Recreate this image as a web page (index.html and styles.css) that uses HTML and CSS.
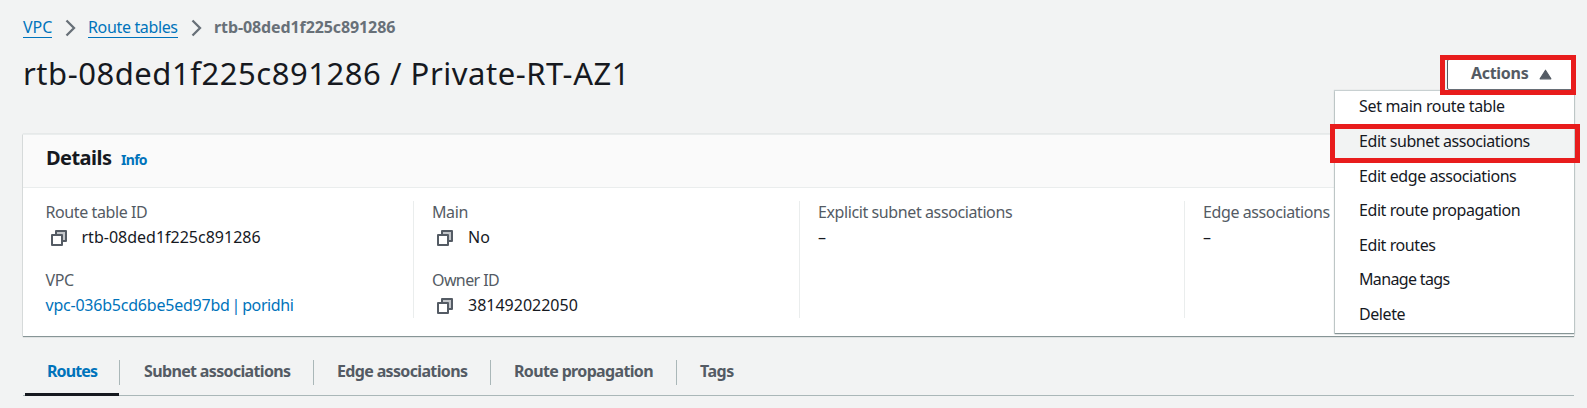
FILE: index.html
```html
<!DOCTYPE html>
<html lang="en">
<head>
<meta charset="utf-8">
<title>Route table details</title>
<link rel="stylesheet" href="styles.css">
</head>
<body>
<svg class="defs" width="0" height="0">
  <symbol id="copy" viewBox="0 0 16 16">
    <path d="M5 2h9v9h-2V5H5z" fill="#c3c6ca"/>
    <path d="M5 4.500V1h10v10h-3.500M1 5h10v10H1z" fill="none" stroke="#545b64" stroke-width="2" stroke-linejoin="round"/>
  </symbol>
  <symbol id="chevron" viewBox="0 0 11 18">
    <path d="M1.500 1.500L9 9l-7.500 7.500" fill="none" stroke="#687078" stroke-width="2.300"/>
  </symbol>
</svg>
<div class="page">
  <nav class="breadcrumbs">
    <a class="crumb crumb-vpc">VPC</a>
    <svg class="chevron"><use href="#chevron"/></svg>
    <a class="crumb crumb-tables">Route tables</a>
    <svg class="chevron"><use href="#chevron"/></svg>
    <span class="crumb-current">rtb-08ded1f225c891286</span>
  </nav>
  <header class="page-header">
    <h1 class="title">rtb-08ded1f225c891286 / Private-RT-AZ1</h1>
    <div class="actions">
      <button class="actions-button">Actions<svg class="caret" viewBox="0 0 12 10"><path d="M6 1l5 8H1z" fill="#545b64" stroke="#545b64" stroke-linejoin="round"/></svg></button>
      <div class="marker marker-button"></div>
      <ul class="menu">
        <li class="menu-item menu-main">Set main route table</li>
        <li class="menu-item highlighted">Edit subnet associations<div class="marker marker-item"></div></li>
        <li class="menu-item">Edit edge associations</li>
        <li class="menu-item">Edit route propagation</li>
        <li class="menu-item">Edit routes</li>
        <li class="menu-item menu-tags">Manage tags</li>
        <li class="menu-item">Delete</li>
      </ul>
    </div>
  </header>
  <section class="card">
    <div class="card-header"><h2 class="card-title">Details</h2><a class="info">Info</a></div>
    <div class="card-body">
      <div class="column">
        <div class="field"><div class="label">Route table ID</div><div class="value"><svg class="copy"><use href="#copy"/></svg><span>rtb-08ded1f225c891286</span></div></div>
        <div class="field"><div class="label">VPC</div><div class="value"><a class="link">vpc-036b5cd6be5ed97bd | <span class="vpc-name">poridhi</span></a></div></div>
      </div>
      <div class="column">
        <div class="field"><div class="label">Main</div><div class="value"><svg class="copy"><use href="#copy"/></svg><span>No</span></div></div>
        <div class="field"><div class="label label-owner">Owner ID</div><div class="value"><svg class="copy"><use href="#copy"/></svg><span>381492022050</span></div></div>
      </div>
      <div class="column">
        <div class="field"><div class="label">Explicit subnet associations</div><div class="value">–</div></div>
      </div>
      <div class="column">
        <div class="field"><div class="label">Edge associations</div><div class="value">–</div></div>
      </div>
    </div>
  </section>
  <nav class="tabs">
    <a class="tab active">Routes</a>
    <a class="tab tab-subnet">Subnet associations</a>
    <a class="tab tab-edge">Edge associations</a>
    <a class="tab tab-propagation">Route propagation</a>
    <a class="tab tab-tags">Tags</a>
  </nav>
</div>
</body>
</html>
```
FILE: styles.css
```css
* { box-sizing: border-box; }
body { margin: 0; background: #f2f3f3; color: #16191f; font: 16px/22px "Noto Sans", sans-serif; height: 408px; overflow: hidden; }
.defs { display: block; height: 0; }
.page { padding: 16px 13px 0 23px; }
.breadcrumbs { display: flex; height: 22px; align-items: flex-start; white-space: nowrap; }
.crumb { color: #0073bb; border-bottom: 1px solid #0073bb; height: 22px; }
.crumb-vpc { width: 29px; }
.crumb-tables { width: 90px; letter-spacing: -0.35px; }
.chevron { width: 11px; height: 18px; margin: 3px 12px 0 13px; flex: none; }
.crumb-current { color: #687078; font-weight: 700; letter-spacing: -0.1px; }
.page-header { display: flex; justify-content: space-between; height: 96px; }
.title { margin: 14px 0 0; font-size: 31px; line-height: 43px; font-weight: 400; white-space: nowrap; letter-spacing: 0.54px; }
.actions { position: relative; width: 127px; padding-top: 21px; }
.actions-button { display: flex; align-items: center; width: 127px; height: 31px; padding: 0 0 3px 23px; border: 1px solid #545b64; border-radius: 2px; background: #fff; color: #545b64; font: 700 16px/22px "Noto Sans", sans-serif; letter-spacing: -0.3px; }
.caret { width: 13px; height: 11px; margin: 2px 0 0 11px; }
.marker { position: absolute; border: 5px solid #e81c1c; z-index: 3; }
.marker-button { left: -7px; top: 17px; width: 136px; height: 40px; }
.menu { position: absolute; z-index: 2; right: 0; top: 53px; width: 239px; height: 242px; margin: 0; padding: 0; list-style: none; background: #fff; box-shadow: 0 1px 1px #879596, 0 0 1px 1px #c8d0d1; display: flex; flex-direction: column; }
.menu-item { position: relative; height: 34.6px; padding: 4.4px 24px; white-space: nowrap; letter-spacing: -0.42px; }
.menu-main { letter-spacing: -0.33px; }
.menu-tags { letter-spacing: -0.65px; }
.highlighted { background: #f2f3f3; }
.marker-item { left: -5px; top: -2px; width: 250px; height: 39px; }
.card { width: 1551px; height: 202px; background: #fff; box-shadow: 0 1px 1px #879596, 0 0 1px #aab7b8; }
.card-header { display: flex; height: 54px; padding: 9px 23px; background: #fafafa; border-top: 1px solid #eaeded; border-bottom: 1px solid #eaeded; align-items: baseline; }
.card-title { margin: 0; font-size: 20px; line-height: 28px; font-weight: 700; width: 75px; letter-spacing: -0.55px; }
.info { color: #0073bb; font-size: 14px; font-weight: 700; letter-spacing: -0.7px; }
.card-body { display: grid; grid-template-columns: 390px 386px 385px 390px; padding-top: 13px; }
.column { height: 117px; padding-left: 18px; border-left: 1px solid #eaeded; }
.column:first-child { border-left: 0; padding-left: 22.5px; }
.field { height: 68px; white-space: nowrap; }
.label { color: #545b64; height: 25px; letter-spacing: -0.4px; }
.label-owner { letter-spacing: -0.6px; }
.value { display: flex; height: 22px; }
.copy { width: 16px; height: 16px; margin: 4px 15px 0 5px; flex: none; }
.link { color: #0073bb; letter-spacing: -0.22px; word-spacing: -2px; }
.vpc-name { letter-spacing: -0.4px; }
.tabs { display: flex; width: 1551px; height: 43px; margin-top: 17px; padding-left: 2px; border-bottom: 1px solid #aab7b8; }
.tab { color: #545b64; font-weight: 700; white-space: nowrap; height: 25px; margin-top: 7px; padding: 0 0 0 24px; border-right: 1px solid #aab7b8; letter-spacing: -0.65px; }
.active { position: relative; color: #0073bb; width: 95px; padding-left: 22px; letter-spacing: -0.9px; }
.active::after { content: ""; position: absolute; left: 0; bottom: -11px; width: 94px; height: 3px; background: #16191f; }
.tab-subnet { width: 194px; }
.tab-edge { width: 177px; padding-left: 23px; }
.tab-propagation { width: 186px; padding-left: 23px; }
.tab-tags { border-right: 0; padding-left: 23px; letter-spacing: -0.5px; }
```
